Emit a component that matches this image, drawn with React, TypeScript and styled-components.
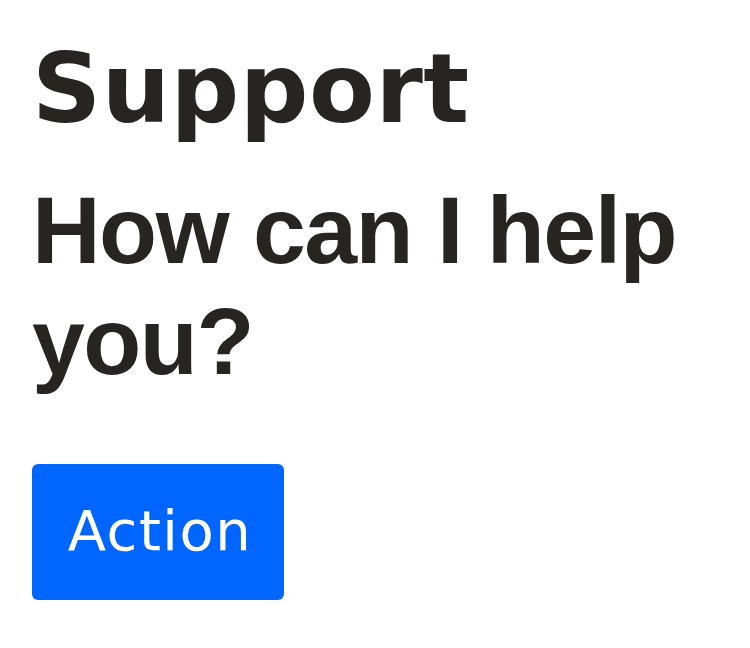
import React from "react";
import styled, { createGlobalStyle } from "styled-components";

const Global = createGlobalStyle`
  html, body { margin: 0; padding: 0; background: #ffffff; }
  body { font-family: "DejaVu Sans", "Liberation Sans", sans-serif; }
`;

const Page = styled.main`
  display: flex;
  flex-direction: column;
  align-items: flex-start;
  padding: 33px 32px 0 32px;
`;

const Title = styled.h1`
  margin: 0;
  font-family: "DejaVu Sans", sans-serif;
  font-weight: 700;
  font-size: 96px;
  line-height: 112px;
  color: #262522;
  letter-spacing: 0.5px;
`;

const Subtitle = styled.h2`
  margin: 30px 0 0 0;
  font-family: "Liberation Sans", Arial, sans-serif;
  font-weight: 700;
  font-size: 95px;
  line-height: 111px;
  color: #262522;
  letter-spacing: -1.5px;
  max-width: 690px;
`;

const ActionButton = styled.button`
  margin-top: 67px;
  display: inline-flex;
  align-items: center;
  justify-content: center;
  width: 252px;
  height: 136px;
  padding: 0 0 2px 4px;
  border: none;
  border-radius: 6px;
  background: #0066ff;
  color: #ffffff;
  font-family: "DejaVu Sans", sans-serif;
  font-weight: 400;
  font-size: 56px;
  letter-spacing: 1.5px;
  line-height: 1;
  cursor: pointer;
`;

export default function App() {
  return (
    <>
      <Global />
      <Page>
        <Title>Support</Title>
        <Subtitle>How can I help you?</Subtitle>
        <ActionButton>Action</ActionButton>
      </Page>
    </>
  );
}
